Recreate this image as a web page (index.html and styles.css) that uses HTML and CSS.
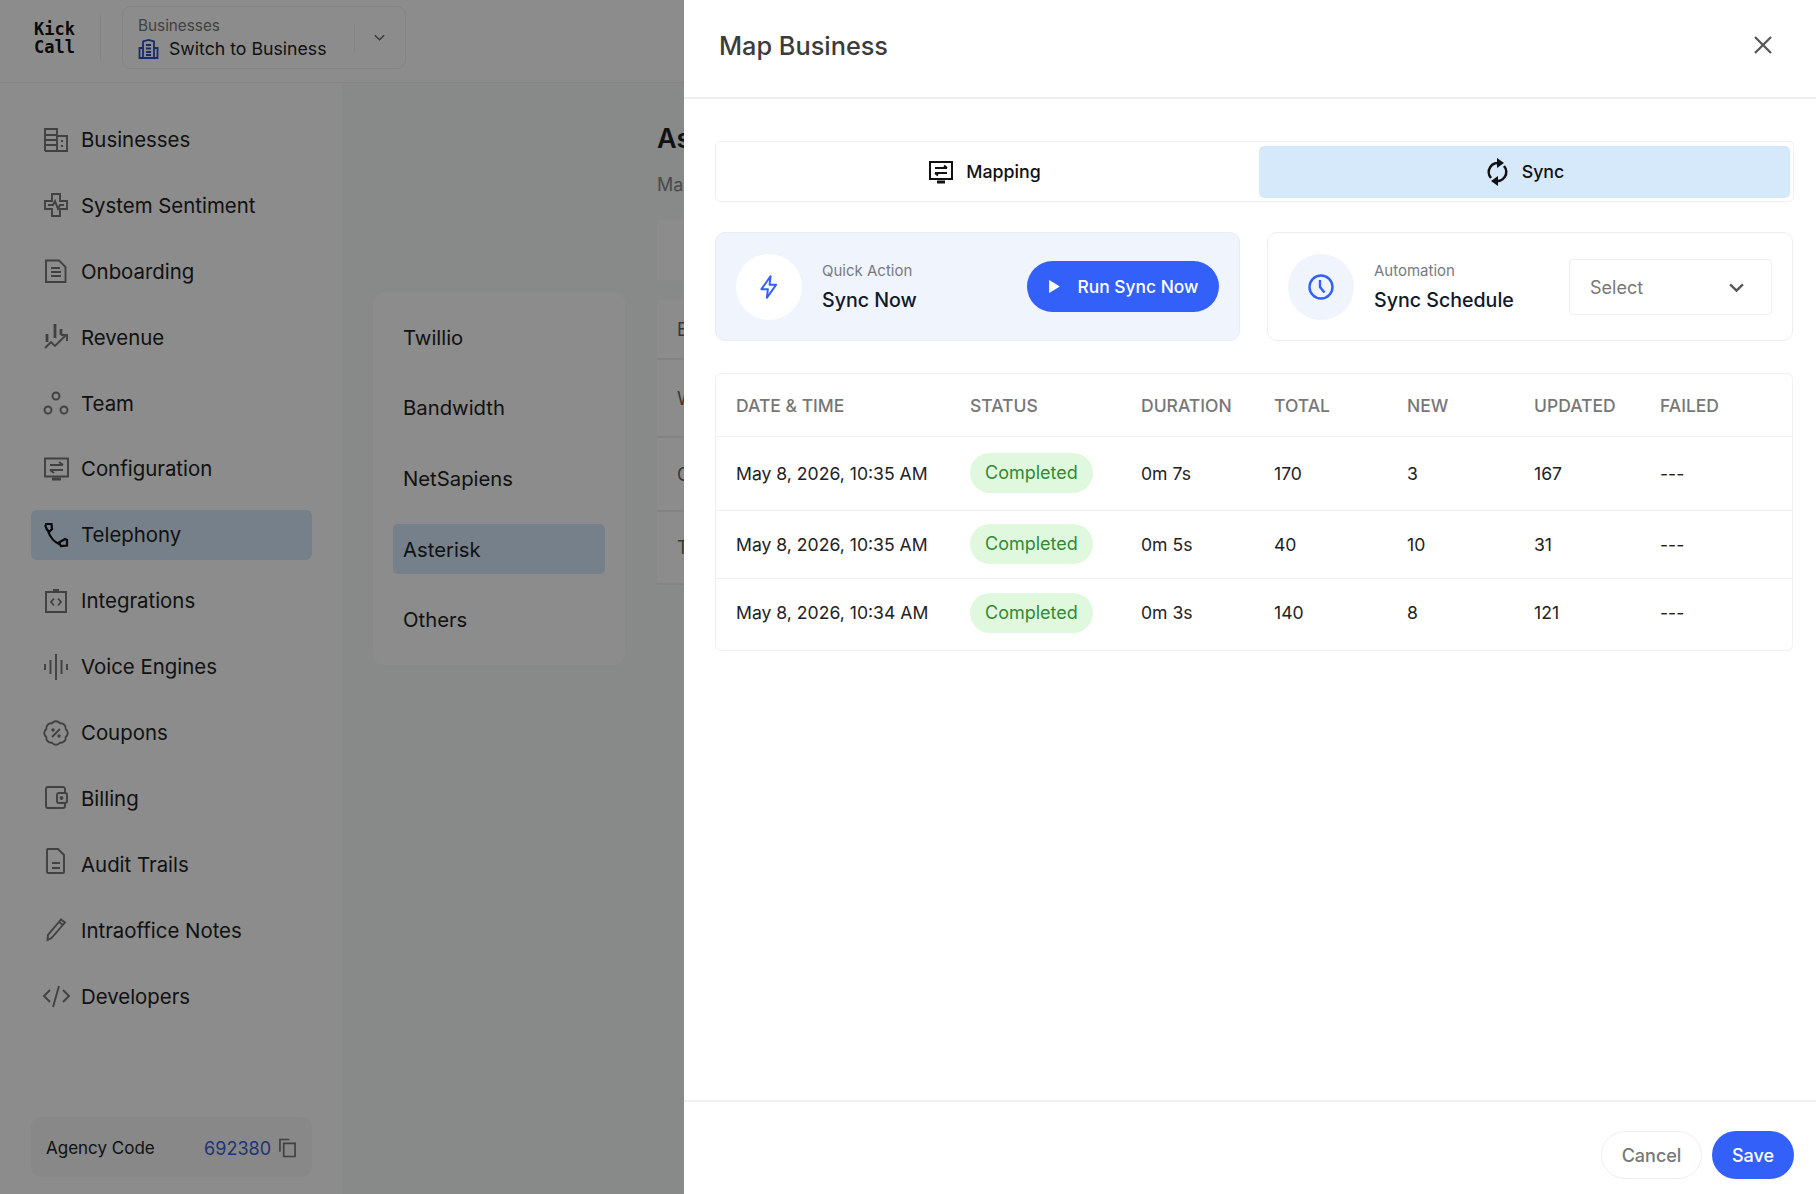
FILE: index.html
```html
<!DOCTYPE html>
<html lang="en">
<head>
    <meta charset="UTF-8">
    <meta name="viewport" content="width=device-width, initial-scale=1.0">
    <title>KickCall</title>
    <link rel="stylesheet" href="styles.css">
</head>
<body>
    <header class="topbar">
        <div class="logo">Kick<br>Call</div>
        <div class="switcher">
            <div class="switcher-text">
                <span class="switcher-label">Businesses</span>
                <span class="switcher-value">
                    <svg class="switcher-icon" viewBox="0 0 20 20" fill="none" stroke="currentColor" stroke-width="1.800"><path d="M4.500 19V2.500L10 1l5.500 1.500V19zM4.500 9H1v10h3.500M15.500 9H19v10h-3.500M1 19h18M7.500 6h5M7.500 9.500h5M7.500 13h5M7.500 16h5"/></svg>
                    Switch to Business
                </span>
            </div>
            <div class="switcher-arrow">
                <svg viewBox="0 0 16 16" fill="none" stroke="currentColor" stroke-width="1.500"><path d="M3 5.500l5 5 5-5"/></svg>
            </div>
        </div>
    </header>

    <div class="layout">
        <aside class="sidebar">
            <nav class="nav">
                <a class="nav-item"><svg viewBox="0 0 24 24"><path d="M1 23V1h12v22M13 8h10v15H1M1 7h12M1 12h12M1 17h12M17 13h2M17 18h2"/></svg>Businesses</a>
                <a class="nav-item"><svg viewBox="0 0 24 24"><path d="M8 1h8v7h7v8h-7v7H8v-7H1V8h7zM4 12h5l2-4 3 8 2-4h4"/></svg>System Sentiment</a>
                <a class="nav-item"><svg viewBox="0 0 24 24"><path d="M2 1.500h13l6.500 6.500v15H2zM7 9h9M7 13h10M7 17h10"/></svg>Onboarding</a>
                <a class="nav-item"><svg viewBox="0 0 24 24"><path d="M1 23l6-6 4 4 11-11M17 10h6v6"/><path class="thick" d="M3 9v8M11-1v14M17 4v6"/></svg>Revenue</a>
                <a class="nav-item"><svg viewBox="0 0 24 24"><circle cx="12" cy="5" r="3.500"/><circle cx="4" cy="19" r="3.500"/><circle cx="20" cy="19" r="3.500"/></svg>Team</a>
                <a class="nav-item"><svg viewBox="0 0 24 24"><path d="M1 1.500h23v18H1zM6 8h13M15 5l4 3M19 13H6M10 16l-4-3"/><path d="M8 22h9" stroke-width="3"/></svg>Configuration</a>
                <a class="nav-item active"><svg viewBox="0 0 24 24"><path d="M1.500 3L2 1h5.500L8 6 5 9Q2 6 1.500 3zM4 8c2 6 6 11 12 13.500M15 19.500L21 16l2 1v5.500l-6 .5z"/></svg>Telephony</a>
                <a class="nav-item"><svg viewBox="0 0 24 24"><path d="M2 3h20v20H2zM10 3V1h4v2M10 9.500L7 13l3 3.500M14 9.500l3 3.500-3 3.500"/></svg>Integrations</a>
                <a class="nav-item"><svg viewBox="0 0 24 24"><path d="M1 9v6M6.500 5v14M12-1v26M17.500 5v14M23 9v6"/></svg>Voice Engines</a>
                <a class="nav-item"><svg viewBox="0 0 24 24"><path d="M21.700 7.980A5 5 0 0 1 21.700 16.020A5 5 0 0 1 16.020 21.700A5 5 0 0 1 7.980 21.700A5 5 0 0 1 2.300 16.020A5 5 0 0 1 2.300 7.980A5 5 0 0 1 7.980 2.300A5 5 0 0 1 16.020 2.300A5 5 0 0 1 21.700 7.980zM16 8l-8 8"/><circle cx="9" cy="9" r=".8"/><circle cx="15" cy="15" r=".8"/></svg>Coupons</a>
                <a class="nav-item"><svg viewBox="0 0 24 24"><path d="M21 7V3a2 2 0 00-2-2H4a2 2 0 00-2 2v17a2 2 0 002 2h15a2 2 0 002-2v-3"/><rect x="13" y="7" width="10" height="10" rx="2"/><circle cx="17.500" cy="12" r="1"/></svg>Billing</a>
                <a class="nav-item"><svg viewBox="0 0 24 24"><path d="M3 -2a1 1 0 011-1h10l6 6v17a1 1 0 01-1 1H4a1 1 0 01-1-1zM8 11h8M8 16h8"/></svg>Audit Trails</a>
                <a class="nav-item"><svg viewBox="0 0 24 24"><path d="M3.500 22l.5-5L17 1.500l4 3L7.500 20zM15 4l4 3"/></svg>Intraoffice Notes</a>
                <a class="nav-item"><svg viewBox="0 0 24 24"><path d="M6 6l-6 6 6 6M19 6l6 6-6 6M15 2L9 23"/></svg>Developers</a>
            </nav>
            <div class="agency">
                <span>Agency Code</span>
                <span class="agency-code">692380</span>
                <svg class="copy-icon" viewBox="0 0 18 20" fill="none" stroke="currentColor" stroke-width="1.800"><path d="M1 14V1h10M5 5h12v14H5z"/></svg>
            </div>
        </aside>

        <section class="providers">
            <div class="provider-list">
                <a class="provider">Twillio</a>
                <a class="provider">Bandwidth</a>
                <a class="provider">NetSapiens</a>
                <a class="provider active">Asterisk</a>
                <a class="provider">Others</a>
            </div>
        </section>

        <main class="content">
            <h2>Asterisk</h2>
            <p>Map businesses</p>
            <div class="content-toolbar"></div>
            <div class="content-table">
                <div class="row-head">Extension</div>
                <div class="row-a">Welcome</div>
                <div class="row-b">Call</div>
                <div class="row-c">Test</div>
            </div>
        </main>
    </div>

    <div class="backdrop"></div>

    <div class="panel">
        <div class="panel-header">
            <h1>Map Business</h1>
            <svg class="close-icon" viewBox="0 0 20 20" fill="none" stroke="currentColor" stroke-width="2.200"><path d="M2 2l16 16M18 2L2 18"/></svg>
        </div>

        <div class="panel-body">
            <div class="tabs">
                <button class="tab">
                    <svg viewBox="0 0 24 24" fill="none" stroke="currentColor" stroke-width="2"><path d="M1 2h22v17H1zM6 8h12M15 5.500L18 8M18 13H6M9 15.500L6 13"/><path d="M8 22h8" stroke-width="3"/></svg>
                    Mapping
                </button>
                <button class="tab active">
                    <svg class="sync-icon" viewBox="0 0 22 28" fill="none" stroke="currentColor" stroke-width="2.600"><path d="M14 5.500A9 9 0 004.500 20"/><path d="M8 22.500A9 9 0 0017.500 8"/><path d="M10.500 0l7 5-7 5z" fill="currentColor" stroke="none"/><path d="M11.500 18l-7 5 7 5z" fill="currentColor" stroke="none"/></svg>
                    Sync
                </button>
            </div>

            <div class="cards">
                <div class="card quick">
                    <div class="card-icon">
                        <svg viewBox="0 0 24 24" fill="none" stroke="currentColor" stroke-width="1.800" stroke-linejoin="round"><path d="M13.500 2L5 14h6l-1 8 8.500-12h-6z"/></svg>
                    </div>
                    <div class="card-text">
                        <span class="card-label">Quick Action</span>
                        <span class="card-title">Sync Now</span>
                    </div>
                    <button class="run-btn">
                        <svg viewBox="0 0 12 14" fill="currentColor"><path d="M1 1l10 6-10 6z"/></svg>
                        Run Sync Now
                    </button>
                </div>
                <div class="card">
                    <div class="card-icon">
                        <svg viewBox="0 0 26 26" fill="none" stroke="currentColor" stroke-width="2.400"><circle cx="13" cy="13" r="11.500"/><path d="M12 6v7l4.500 5.500"/></svg>
                    </div>
                    <div class="card-text">
                        <span class="card-label">Automation</span>
                        <span class="card-title">Sync Schedule</span>
                    </div>
                    <div class="select">
                        Select
                        <svg viewBox="0 0 16 16" fill="none" stroke="currentColor" stroke-width="2.200"><path d="M2 5l6 6 6-6"/></svg>
                    </div>
                </div>
            </div>

            <div class="table-wrap">
                <table class="sync-table">
                    <thead>
                        <tr>
                            <th>Date &amp; Time</th>
                            <th>Status</th>
                            <th>Duration</th>
                            <th>Total</th>
                            <th>New</th>
                            <th>Updated</th>
                            <th>Failed</th>
                        </tr>
                    </thead>
                    <tbody>
                        <tr>
                            <td>May 8, 2026, 10:35 AM</td>
                            <td><span class="badge">Completed</span></td>
                            <td>0m 7s</td>
                            <td>170</td>
                            <td>3</td>
                            <td>167</td>
                            <td>---</td>
                        </tr>
                        <tr>
                            <td>May 8, 2026, 10:35 AM</td>
                            <td><span class="badge">Completed</span></td>
                            <td>0m 5s</td>
                            <td>40</td>
                            <td>10</td>
                            <td>31</td>
                            <td>---</td>
                        </tr>
                        <tr>
                            <td>May 8, 2026, 10:34 AM</td>
                            <td><span class="badge">Completed</span></td>
                            <td>0m 3s</td>
                            <td>140</td>
                            <td>8</td>
                            <td>121</td>
                            <td>---</td>
                        </tr>
                    </tbody>
                </table>
            </div>
        </div>

        <div class="panel-footer">
            <button class="btn-cancel">Cancel</button>
            <button class="btn-save">Save</button>
        </div>
    </div>
</body>
</html>
```

FILE: styles.css
```css
* {
    margin: 0;
    padding: 0;
    box-sizing: border-box;
}

body {
    font-family: "Inter", "Liberation Sans", sans-serif;
    height: 100vh;
    overflow: hidden;
    display: flex;
    flex-direction: column;
    background: #fff;
    color: #222;
}

button {
    font-family: inherit;
    border: none;
    background: none;
}

/* top bar */
.topbar {
    height: 83px;
    flex-shrink: 0;
    display: flex;
    align-items: flex-start;
    border-bottom: 1px solid #f0f0f0;
    padding: 6px 0 0 34px;
}

.logo {
    font-family: "DejaVu Sans Mono", "Liberation Mono", monospace;
    font-weight: bold;
    font-size: 17px;
    line-height: 17.500px;
    color: #111;
    width: 67px;
    height: 46px;
    margin-top: 9px;
    padding-top: 6px;
    border-right: 1px solid #eee;
}

.switcher {
    width: 284px;
    height: 63px;
    margin-left: 21px;
    border: 1.5px solid #eee;
    border-radius: 9px;
    display: flex;
    align-items: center;
    justify-content: space-between;
    padding: 0 18px 0 15px;
}

.switcher-text {
    display: flex;
    flex-direction: column;
    gap: 3px;
}

.switcher-label {
    font-size: 15.300px;
    color: #777;
}

.switcher-value {
    display: flex;
    align-items: center;
    gap: 10px;
    font-size: 17.700px;
    color: #222;
}

.switcher-icon {
    width: 21px;
    height: 20px;
    color: #2c4fc4;
}

.switcher-arrow {
    height: 28px;
    padding-left: 17px;
    border-left: 1px solid #eee;
    display: flex;
    align-items: center;
    color: #666;
}

.switcher-arrow svg {
    width: 15px;
    height: 15px;
}

/* sidebar + page behind the panel */
.layout {
    flex: 1;
    display: flex;
    min-height: 0;
    background: #f8fafa;
}

.sidebar {
    width: 342px;
    flex-shrink: 0;
    background: #fff;
    padding: 31.500px 30px 17px 31px;
    display: flex;
    flex-direction: column;
    justify-content: space-between;
}

.nav {
    display: flex;
    flex-direction: column;
    gap: 15.900px;
}

.nav-item {
    height: 50px;
    display: flex;
    align-items: center;
    gap: 13px;
    padding-left: 13px;
    border-radius: 6px;
    font-size: 20.400px;
    color: #222;
}

.nav-item svg {
    width: 24px;
    height: 24px;
    flex-shrink: 0;
    fill: none;
    stroke: #777;
    stroke-width: 1.900;
    overflow: visible;
}

.nav-item svg .thick {
    stroke-width: 2.800;
}

.nav-item.active {
    background: #d6e9fb;
}

.nav-item.active svg {
    stroke: #111;
    stroke-width: 2.200;
}

.agency {
    height: 60px;
    background: #f7f7f7;
    border-radius: 10px;
    display: flex;
    align-items: center;
    padding: 2px 16px 0 15px;
    font-size: 17px;
    color: #222;
}

.agency-code {
    margin-left: auto;
    font-size: 18px;
    color: #3d5fd8;
}

.copy-icon {
    width: 17px;
    height: 20px;
    margin-left: 8px;
    color: #777;
}

.providers {
    width: 252px;
    margin: 209px 0 0 31px;
    flex-shrink: 0;
}

.provider-list {
    background: #fff;
    border-radius: 12px;
    padding: 20px;
    display: flex;
    flex-direction: column;
    gap: 20px;
    height: 373px;
}

.provider {
    height: 51px;
    display: flex;
    align-items: center;
    padding-left: 10px;
    border-radius: 5px;
    font-size: 20.300px;
    color: #222;
}

.provider.active {
    background: #d6e9fb;
}

.content {
    margin-left: 32px;
    padding-top: 39px;
    width: 27px;
    white-space: nowrap;
}

.content h2 {
    font-size: 27px;
    font-weight: 600;
    line-height: 34px;
    color: #222;
}

.content p {
    font-size: 18px;
    line-height: 24px;
    margin-top: 17px;
    color: #888;
}

.content-toolbar {
    height: 60px;
    margin-top: 23px;
    background: #fff;
}

.content-table {
    margin-top: 20px;
    background: #fff;
    font-size: 18px;
    color: #666;
}

.content-table div {
    display: flex;
    align-items: center;
    padding-left: 20px;
    border-bottom: 2px solid #eee;
}

.content-table .row-head { height: 60px; }
.content-table .row-a { height: 78px; }
.content-table .row-b { height: 74px; }
.content-table .row-c { height: 73px; }

.backdrop {
    position: fixed;
    inset: 0;
    background: rgba(0, 0, 0, 0.45);
}

/* slide-over panel */
.panel {
    position: fixed;
    top: 0;
    right: 0;
    bottom: 0;
    width: 1132px;
    background: #fff;
    display: flex;
    flex-direction: column;
}

.panel-header {
    height: 99px;
    flex-shrink: 0;
    display: flex;
    align-items: center;
    justify-content: space-between;
    padding: 0 43px 8px 35px;
    border-bottom: 2px solid #eee;
}

.panel-header h1 {
    font-size: 25.300px;
    font-weight: 500;
    color: #3c3c3c;
    padding-top: 2px;
}

.close-icon {
    width: 20px;
    height: 20px;
    color: #555;
}

.panel-body {
    flex: 1;
    padding: 42px 23px 0 31px;
}

.tabs {
    height: 61px;
    margin-right: -1px;
    border: 1.5px solid #f0f0f0;
    border-radius: 5px;
    padding: 3.500px;
    display: grid;
    grid-template-columns: 1fr 1fr;
    gap: 8px;
}

.tab {
    display: flex;
    align-items: center;
    justify-content: center;
    gap: 13px;
    border-radius: 5px;
    font-size: 17.800px;
    font-weight: 500;
    color: #111;
}

.tab svg {
    width: 24px;
    height: 24px;
}

.tab .sync-icon {
    width: 23px;
    height: 28px;
}

.tab.active {
    background: #d6e9fb;
    padding-left: 2px;
}

.cards {
    margin-top: 30px;
    display: grid;
    grid-template-columns: 525px 1fr;
    gap: 27px;
}

.card {
    height: 109px;
    border: 1.5px solid #eee;
    border-radius: 10px;
    display: flex;
    align-items: center;
    gap: 20px;
    padding: 0 20px;
}

.card.quick {
    background: #f0f4fd;
    border-color: #e8ecf5;
}

.card-icon {
    width: 66px;
    height: 66px;
    border-radius: 50%;
    background: #f0f4fd;
    display: flex;
    align-items: center;
    justify-content: center;
    color: #3360f8;
    flex-shrink: 0;
}

.quick .card-icon {
    background: #fff;
}

.card-icon svg {
    width: 26px;
    height: 26px;
}

.card-text {
    flex: 1;
    display: flex;
    flex-direction: column;
    gap: 8px;
}

.card-label {
    font-size: 15px;
    color: #777a85;
}

.card-title {
    font-size: 19.600px;
    font-weight: 500;
    color: #111827;
}

.run-btn {
    height: 51px;
    width: 192px;
    border-radius: 26px;
    background: #3360f8;
    color: #fff;
    font-size: 17.400px;
    font-weight: 500;
    display: flex;
    align-items: center;
    justify-content: center;
    gap: 17px;
}

.run-btn svg {
    width: 13px;
    height: 15px;
}

.select {
    width: 203px;
    height: 56px;
    border: 1.5px solid #eee;
    border-radius: 4px;
    display: flex;
    align-items: center;
    justify-content: space-between;
    padding: 1px 26px 0 20px;
    font-size: 18px;
    color: #777;
}

.select svg {
    width: 17px;
    height: 17px;
    color: #555;
}

.table-wrap {
    margin-top: 32px;
    border: 1.5px solid #f0f0f0;
    border-radius: 6px;
}

.sync-table {
    width: 100%;
    table-layout: fixed;
    border-collapse: collapse;
}

.sync-table th,
.sync-table td {
    padding-left: 20px;
    text-align: left;
    font-size: 17.600px;
    color: #222;
}

.sync-table th {
    height: 62px;
    padding-top: 2px;
    font-size: 17.500px;
    font-weight: 500;
    text-transform: uppercase;
    color: #777;
}

.sync-table th:nth-child(1) { width: 234px; }
.sync-table th:nth-child(2) { width: 171px; }
.sync-table th:nth-child(3) { width: 133px; }
.sync-table th:nth-child(4) { width: 133px; }
.sync-table th:nth-child(5) { width: 127px; }
.sync-table th:nth-child(6) { width: 126px; }

.sync-table tbody tr {
    height: 68px;
    border-top: 1.500px solid #f0f0f0;
}

.sync-table tbody tr:nth-child(1) { height: 74px; }
.sync-table tbody tr:nth-child(3) { height: 72px; }
.sync-table tbody tr:nth-child(3) td { padding-bottom: 3px; }

.badge {
    display: inline-block;
    height: 40px;
    line-height: 40px;
    padding: 0 15px;
    border-radius: 20px;
    background: #e0f8de;
    color: #338a33;
    font-size: 18px;
}

.panel-footer {
    height: 94px;
    flex-shrink: 0;
    border-top: 2px solid #f0f0f0;
    display: flex;
    justify-content: flex-end;
    align-items: flex-start;
    gap: 10px;
    padding: 29px 22px 0 0;
}

.btn-cancel,
.btn-save {
    height: 48px;
    border-radius: 24px;
    font-size: 18px;
    font-weight: 500;
}

.btn-cancel {
    width: 101px;
    border: 1.5px solid #eee;
    color: #777;
}

.btn-save {
    width: 82px;
    background: #3360f8;
    color: #fff;
}
```
